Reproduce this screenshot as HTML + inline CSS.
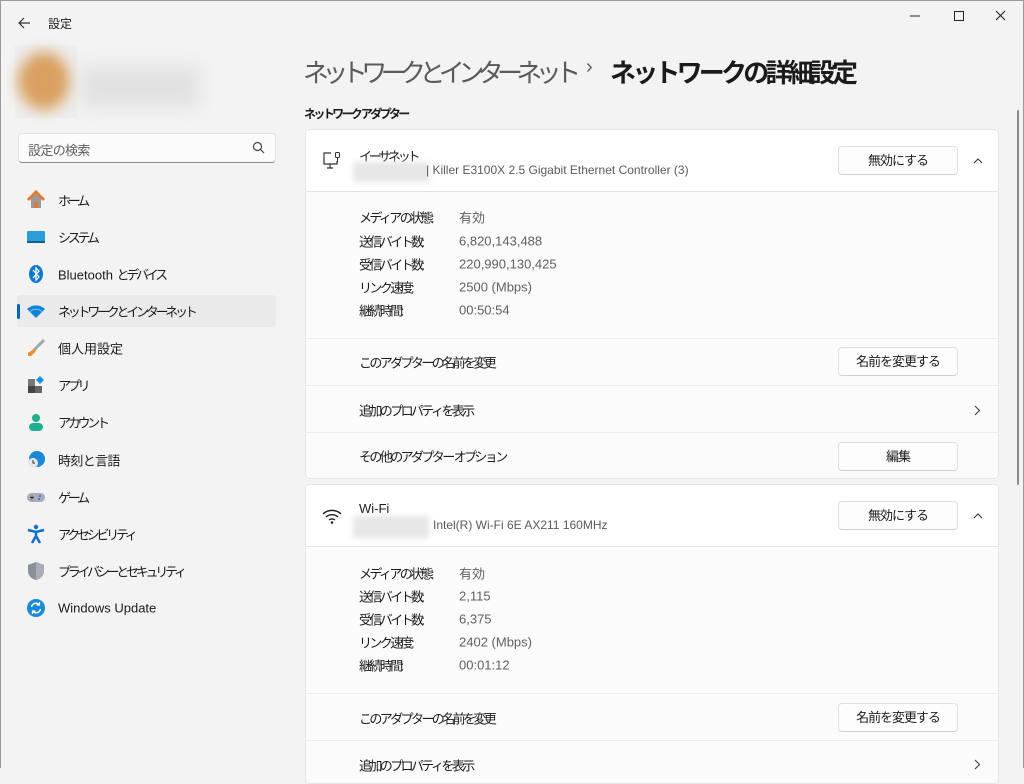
<!DOCTYPE html>
<html><head><meta charset="utf-8"><style>
*{margin:0;padding:0;box-sizing:border-box}
body{width:1024px;height:768px;overflow:hidden;background:#f3f3f3;font-family:"Liberation Sans","Noto Sans CJK JP",sans-serif;font-size:13px;color:#1b1b1b;position:relative}
.a{position:absolute;white-space:nowrap}
.nav{position:absolute;left:58px;font-size:13px;transform:translateY(-50%);white-space:nowrap}
.ic{position:absolute;left:26px;width:20px;height:20px;transform:translateY(-50%)}
.card{position:absolute;left:305px;width:694px;background:#fbfbfb;border:1px solid #e5e5e5;border-radius:5px;overflow:hidden}
.hd{position:absolute;left:0;top:0;width:100%;height:62px;background:#fff;border-bottom:1px solid #e5e5e5}
.sep{position:absolute;left:0;width:100%;border-top:1px solid #ebebeb}
.btn{position:absolute;left:532px;width:120px;height:29px;background:#fdfdfd;border:1px solid #e0e0e0;border-bottom-color:#cfcfcf;border-radius:4px;text-align:center;line-height:27px;font-size:13px;letter-spacing:-0.08em}
.lbl{position:absolute;left:53px;transform:translateY(-50%);white-space:nowrap;letter-spacing:-0.2em}
.val{position:absolute;left:153px;transform:translateY(-50%);color:#5f5f5f;white-space:nowrap}
.blur{position:absolute;background:#e6e6e6;filter:blur(3px)}
.k{letter-spacing:-0.25em}
.m{letter-spacing:-0.12em}
</style></head><body>
<div style="position:absolute;left:0;top:0;width:1024px;height:768px;border:1px solid #9a9a9a;border-bottom:none;pointer-events:none;z-index:9"></div>
<svg class="a" style="left:16px;top:15px" width="16" height="16" viewBox="0 0 16 16"><path d="M14 8H3M8 3L3 8l5 5" stroke="#333" stroke-width="1.2" fill="none"/></svg>
<div class="a" style="left:48px;top:15px;font-size:12px">設定</div>
<svg class="a" style="left:905px;top:8px" width="110" height="16" viewBox="0 0 110 16"><path d="M5 8h10" stroke="#222"/><path d="M49.5 3.5h9v9h-9z" stroke="#222" fill="none"/><path d="M91 3l9 9M100 3l-9 9" stroke="#222" stroke-width="1.1"/></svg>
<div class="a" style="left:15px;top:45px;width:62px;height:73px;background:#eee"></div>
<div class="a" style="left:18px;top:52px;width:52px;height:58px;border-radius:50%;background:#d9a060;filter:blur(7px)"></div>
<div class="a" style="left:80px;top:66px;width:120px;height:42px;background:#e2e2e2;filter:blur(8px)"></div>
<div class="a" style="left:18px;top:133px;width:258px;height:30px;background:#fbfbfb;border:1px solid #e3e3e3;border-bottom:1px solid #8a8a8a;border-radius:4px"></div>
<div class="a" style="left:28px;top:140px;color:#606060;letter-spacing:-0.05em">設定の検索</div>
<svg class="a" style="left:252px;top:141px" width="13" height="13" viewBox="0 0 13 13"><circle cx="5.5" cy="5.5" r="4" stroke="#444" fill="none" stroke-width="1.2"/><path d="M8.5 8.5L12 12" stroke="#444" stroke-width="1.2"/></svg>
<div class="a" style="left:17px;top:295px;width:259px;height:32px;background:#eaeaea;border-radius:4px"></div>
<div class="a" style="left:17px;top:304px;width:3px;height:15px;background:#0067c0;border-radius:2px"></div>
<svg class="ic" style="top:200px" viewBox="0 0 20 20"><path d="M2 10L10 2l8 8" stroke="#e07a30" stroke-width="3" fill="none"/><path d="M5 9v9h10V9L10 4z" fill="#9a9a9a"/><rect x="8" y="12" width="4" height="6" fill="#e07a30"/></svg>
<div class="nav k" style="top:200px">ホーム</div>
<svg class="ic" style="top:237px" viewBox="0 0 20 20"><rect x="1" y="4" width="18" height="12" rx="1" fill="#2a9fd6"/><rect x="1" y="14" width="18" height="2" fill="#1a5f8a"/></svg>
<div class="nav k" style="top:237px">システム</div>
<svg class="ic" style="top:274px" viewBox="0 0 20 20"><ellipse cx="10" cy="10" rx="7" ry="9" fill="#0a78d4"/><path d="M7 6l6 7-3 3V4l3 3-6 7" stroke="#fff" stroke-width="1.3" fill="none"/></svg>
<div class="nav" style="top:274px">Bluetooth <span class="k">とデバイス</span></div>
<svg class="ic" style="top:311px" viewBox="0 0 20 20"><path d="M1 8a13 13 0 0 1 18 0L10 17z" fill="#0a84d8"/><path d="M4 10.5a9 9 0 0 1 12 0" stroke="#7cc4f5" stroke-width="1" fill="none"/></svg>
<div class="nav k" style="top:311px">ネットワークとインターネット</div>
<svg class="ic" style="top:348px" viewBox="0 0 20 20"><path d="M18 2L8 12" stroke="#9aa" stroke-width="3"/><path d="M8 11l2 2-5 5-3 0 0-3z" fill="#f08a2a"/></svg>
<div class="nav" style="top:348px">個人用設定</div>
<svg class="ic" style="top:385px" viewBox="0 0 20 20"><rect x="2" y="4" width="7" height="7" fill="#777"/><rect x="2" y="11" width="7" height="7" fill="#444"/><rect x="9" y="11" width="7" height="7" fill="#666"/><path d="M14 1l4 4-4 4-4-4z" fill="#1a90e0"/></svg>
<div class="nav k" style="top:385px">アプリ</div>
<svg class="ic" style="top:422px" viewBox="0 0 20 20"><circle cx="10" cy="6" r="4" fill="#20b090"/><rect x="3" y="11" width="14" height="8" rx="4" fill="#20b090"/></svg>
<div class="nav k" style="top:422px">アカウント</div>
<svg class="ic" style="top:460px" viewBox="0 0 20 20"><circle cx="11" cy="9" r="8" fill="#1a8ad8"/><circle cx="7" cy="13" r="5" fill="#e8e8e8"/><path d="M7 10v3h2" stroke="#333" fill="none"/></svg>
<div class="nav" style="top:460px;letter-spacing:-0.05em">時刻と言語</div>
<svg class="ic" style="top:497px" viewBox="0 0 20 20"><rect x="1" y="6" width="18" height="9" rx="4.5" fill="#aab"/><path d="M4 10.5h4M6 8.5v4" stroke="#333"/><circle cx="14" cy="9" r="1" fill="#1a70d0"/><circle cx="13" cy="12" r="1" fill="#1a70d0"/></svg>
<div class="nav k" style="top:497px">ゲーム</div>
<svg class="ic" style="top:534px" viewBox="0 0 20 20"><circle cx="10" cy="3" r="2.2" fill="#0a6fd0"/><path d="M2 6l8 2 8-2M10 8v4l-4 7M10 12l4 7" stroke="#0a6fd0" stroke-width="2.5" fill="none"/></svg>
<div class="nav k" style="top:534px">アクセシビリティ</div>
<svg class="ic" style="top:571px" viewBox="0 0 20 20"><path d="M10 1l8 3v6c0 5-4 8-8 9-4-1-8-4-8-9V4z" fill="#8a9098"/><path d="M10 1l8 3v6c0 5-4 8-8 9z" fill="#a8aeb5"/></svg>
<div class="nav k" style="top:571px">プライバシーとセキュリティ</div>
<svg class="ic" style="top:608px" viewBox="0 0 20 20"><circle cx="10" cy="10" r="9" fill="#1a8ad8"/><path d="M5.5 9a4.5 4.5 0 0 1 8-2M14.5 11a4.5 4.5 0 0 1-8 2" stroke="#fff" stroke-width="1.5" fill="none"/><path d="M13.5 4v3h-3M6.5 16v-3h3" stroke="#fff" stroke-width="1.3" fill="none"/></svg>
<div class="nav" style="top:608px">Windows Update</div>

<div class="a" style="left:303px;top:53px;font-size:26px;color:#5a5a5a;letter-spacing:-6.6px">ネットワークとインターネット</div>
<div class="a" style="left:586px;top:56px;font-size:20px;color:#5a5a5a">›</div>
<div class="a" style="left:610px;top:53px;font-size:26px;font-weight:bold;color:#1b1b1b;letter-spacing:-3.8px">ネットワークの詳細設定</div>
<div class="a" style="left:304px;top:105px;font-size:12px;font-weight:bold;letter-spacing:-0.22em">ネットワーク アダプター</div>

<div class="card" style="top:129px;height:350px">
 <div class="hd"></div>
 <svg class="a" style="left:15px;top:20px" width="22" height="22" viewBox="0 0 22 22"><path d="M10 3H3v11h13v-3M6 18h6M9 14v4" stroke="#333" stroke-width="1.2" fill="none"/><rect x="14.5" y="2.5" width="4" height="5" rx="1" stroke="#333" fill="none"/><path d="M16.5 7.5v5" stroke="#333"/></svg>
 <div class="a k" style="left:53px;top:16px">イーサネット</div>
 <div class="blur" style="left:47px;top:32px;width:76px;height:20px"></div>
 <div class="a" style="left:120px;top:33px;font-size:12px;color:#5a5a5a">| Killer E3100X 2.5 Gigabit Ethernet Controller (3)</div>
 <div class="btn" style="top:16px">無効にする</div>
 <svg class="a" style="left:667px;top:27px" width="10" height="7" viewBox="0 0 10 7"><path d="M1 6l4-4 4 4" stroke="#333" fill="none"/></svg>
 <div class="lbl" style="top:87px">メディアの状態:</div><div class="val" style="top:87px">有効</div>
 <div class="lbl" style="top:111px">送信バイト数:</div><div class="val" style="top:111px">6,820,143,488</div>
 <div class="lbl" style="top:134px">受信バイト数:</div><div class="val" style="top:134px">220,990,130,425</div>
 <div class="lbl" style="top:157px">リンク速度:</div><div class="val" style="top:157px">2500 (Mbps)</div>
 <div class="lbl" style="top:180px">継続時間:</div><div class="val" style="top:180px">00:50:54</div>
 <div class="sep" style="top:208px"></div>
 <div class="lbl" style="top:232px">このアダプターの名前を変更</div>
 <div class="btn" style="top:217px">名前を変更する</div>
 <div class="sep" style="top:255px"></div>
 <div class="lbl" style="top:280px">追加のプロパティを表示</div>
 <svg class="a" style="left:668px;top:275px" width="7" height="11" viewBox="0 0 7 11"><path d="M1 1l4.5 4.5L1 10" stroke="#333" fill="none"/></svg>
 <div class="sep" style="top:302px"></div>
 <div class="lbl" style="top:326px">その他のアダプター オプション</div>
 <div class="btn" style="top:312px">編集</div>
</div>

<div class="card" style="top:484px;height:300px">
 <div class="hd"></div>
 <svg class="a" style="left:15px;top:22px" width="22" height="18" viewBox="0 0 22 18"><path d="M2 7a13 13 0 0 1 18 0M5 10a9 9 0 0 1 12 0M8 13a5 5 0 0 1 6 0" stroke="#222" stroke-width="1.4" fill="none"/><circle cx="11" cy="15.5" r="1.3" fill="#222"/></svg>
 <div class="a" style="left:53px;top:16px">Wi-Fi</div>
 <div class="blur" style="left:47px;top:31px;width:76px;height:22px"></div>
 <div class="a" style="left:127px;top:33px;font-size:12px;color:#5a5a5a">Intel(R) Wi-Fi 6E AX211 160MHz</div>
 <div class="btn" style="top:16px">無効にする</div>
 <svg class="a" style="left:667px;top:27px" width="10" height="7" viewBox="0 0 10 7"><path d="M1 6l4-4 4 4" stroke="#333" fill="none"/></svg>
 <div class="lbl" style="top:88px">メディアの状態:</div><div class="val" style="top:88px">有効</div>
 <div class="lbl" style="top:111px">送信バイト数:</div><div class="val" style="top:111px">2,115</div>
 <div class="lbl" style="top:134px">受信バイト数:</div><div class="val" style="top:134px">6,375</div>
 <div class="lbl" style="top:157px">リンク速度:</div><div class="val" style="top:157px">2402 (Mbps)</div>
 <div class="lbl" style="top:180px">継続時間:</div><div class="val" style="top:180px">00:01:12</div>
 <div class="sep" style="top:208px"></div>
 <div class="lbl" style="top:233px">このアダプターの名前を変更</div>
 <div class="btn" style="top:218px">名前を変更する</div>
 <div class="sep" style="top:255px"></div>
 <div class="lbl" style="top:280px">追加のプロパティを表示</div>
 <svg class="a" style="left:668px;top:274px" width="7" height="11" viewBox="0 0 7 11"><path d="M1 1l4.5 4.5L1 10" stroke="#333" fill="none"/></svg>
</div>
<div class="a" style="left:1017px;top:110px;width:2px;height:375px;background:#8a8a8a;border-radius:1px"></div>
</body></html>
